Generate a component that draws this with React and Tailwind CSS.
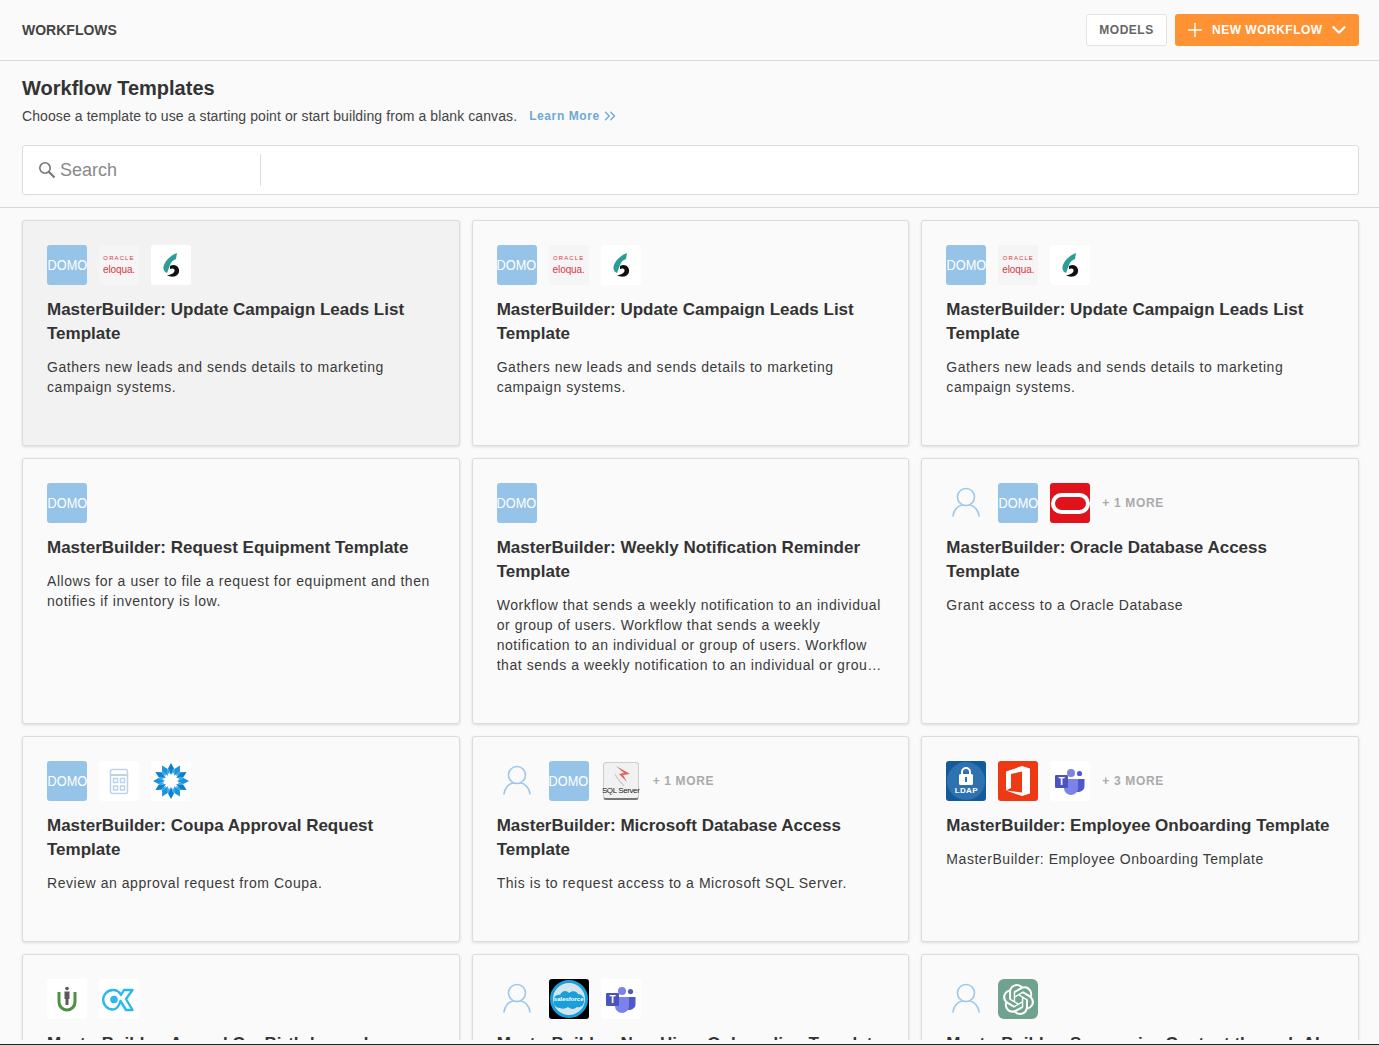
import { ChevronsRight, Plus, ChevronDown } from "lucide-react";
import { SiOpenai } from "react-icons/si";

function Tile({ className = "", children }) {
  return (
    <div className={`w-10 h-10 shrink-0 rounded-[3px] overflow-hidden flex items-center justify-center ${className}`}>
      {children}
    </div>
  );
}

function Domo() {
  return (
    <Tile className="bg-[#96c3e8]">
      <span className="text-white text-[15px] leading-none scale-x-[0.85] -mt-[2px] whitespace-nowrap font-normal">DOMO</span>
    </Tile>
  );
}

function Eloqua() {
  return (
    <Tile className="bg-[#f5f5f5] flex-col">
      <span className="text-[#d8373f] text-[6px] leading-[7px] tracking-[1.1px]">ORACLE</span>
      <span className="text-[#d8373f] text-[10px] leading-[11px] mt-[2px] tracking-[-0.1px]">eloqua.</span>
    </Tile>
  );
}

function Six() {
  return (
    <Tile className="bg-white">
      <svg width="40" height="40" viewBox="0 0 40 40">
        <path d="M26 8 L25 14 C22 15 20 17 19 20 L16 28 C14 27 12 25 12.500 22 C13.500 16 20 10 26 8 Z" fill="#2a9d94" />
        <path d="M19 21 C24 18 29 22 28 27 C27 32 20 33 16 30 C20 30 23 28 23.500 26 C24 24 22 22.500 19 24 Z" fill="#111" />
      </svg>
    </Tile>
  );
}

function Person() {
  return (
    <div className="w-10 h-10 shrink-0 flex items-center justify-center">
      <svg width="40" height="40" viewBox="0 0 40 40" fill="none" stroke="#9cc7ea" strokeWidth="1.6">
        <circle cx="20" cy="14" r="8.500" />
        <path d="M7 33 C7.500 27 12 22.500 16 22 M33 33 C32.500 27 28 22.500 24 22" strokeLinecap="round" />
      </svg>
    </div>
  );
}

function OracleDb() {
  return (
    <Tile className="bg-[#e0131c]">
      <div className="w-[39px] h-[21px] shrink-0 rounded-full border-[4.5px] border-white" />
    </Tile>
  );
}

function Calc() {
  return (
    <Tile className="bg-white">
      <svg width="40" height="40" viewBox="0 0 40 40" fill="none" stroke="#bcd3ea" strokeWidth="1.5">
        <rect x="11.500" y="8.500" width="17" height="24" rx="2" />
        <path d="M12 14 H28" strokeWidth="2" />
        <rect x="14.500" y="17.500" width="4" height="4" />
        <rect x="21.500" y="17.500" width="4" height="4" />
        <rect x="14.500" y="25" width="4" height="4" />
        <rect x="21.500" y="25" width="4" height="4" />
      </svg>
    </Tile>
  );
}

const petals = [0, 30, 60, 90, 120, 150, 180, 210, 240, 270, 300, 330];

function Coupa() {
  return (
    <Tile className="bg-white">
      <svg width="40" height="40" viewBox="0 0 40 40">
        {petals.map((a, i) => (
          <path
            key={a}
            d="M20 14 L17 7.500 L20 2 L23 7.500 Z"
            fill={i % 2 ? "#1b93dc" : "#0f7fcb"}
            transform={`rotate(${a} 20 20)`}
          />
        ))}
        {petals.map((a) => (
          <path key={a} d="M20 13 L18.200 9.500 L20 7 L21.800 9.500 Z" fill="#35a9e8" transform={`rotate(${a + 15} 20 20)`} />
        ))}
      </svg>
    </Tile>
  );
}

function SqlServer() {
  return (
    <Tile>
      <div className="w-9 h-[38px] rounded-[3px] bg-[#f1f1f1] border border-[#ccc] border-b-2 border-b-[#777] flex flex-col items-center justify-end">
        <svg width="24" height="21" viewBox="0 0 24 21" className="shrink-0">
          <path d="M7 1 L21 9 L14 10 L18 17 L10 9 L15 8 Z" fill="#e4605a" />
          <path d="M6 9 C8 14 12 17 15 21" fill="none" stroke="#c9c9c9" strokeWidth="1.2" />
        </svg>
        <span className="text-[#222] text-[8px] leading-[10px] tracking-[-0.4px] whitespace-nowrap mb-[2px]">SQL Server</span>
      </div>
    </Tile>
  );
}

function Ldap() {
  return (
    <Tile className="bg-[#135a9c] relative">
      <div className="absolute w-[38px] h-[38px] rounded-full bg-[#2f72b0]" />
      <div className="relative flex flex-col items-center">
        <svg width="16" height="20" viewBox="0 0 16 20">
          <path d="M4 9 V6 A4 4 0 0 1 12 6 V9" fill="none" stroke="white" strokeWidth="2" />
          <rect x="1" y="8" width="14" height="11" rx="1.500" fill="white" />
          <rect x="7" y="11" width="2" height="5" fill="#2f72b0" />
        </svg>
        <span className="text-white text-[8px] leading-[10px] font-bold tracking-[0.3px]">LDAP</span>
      </div>
    </Tile>
  );
}

function Office() {
  return (
    <Tile className="bg-[#ee3a14]">
      <svg width="40" height="40" viewBox="0 0 40 40">
        <path d="M8 10.500 L24 5 L32 7.500 V32.500 L24 35 L8 29.500 L24 31.500 V10.500 L13 13 V27 L8 29.500 Z" fill="white" />
      </svg>
    </Tile>
  );
}

function Teams() {
  return (
    <Tile className="bg-white">
      <svg width="40" height="40" viewBox="0 0 40 40">
        <circle cx="29.500" cy="12.500" r="2.600" fill="#5059c9" />
        <path d="M27 18 H34.500 V25 C34.500 29 31 31 27 31 Z" fill="#5059c9" />
        <circle cx="21" cy="12" r="4" fill="#7b83eb" />
        <path d="M14 18 H28 V27 A7 7 0 0 1 14 27 Z" fill="#7b83eb" />
        <rect x="5" y="14" width="13" height="13" rx="1.200" fill="#4b53bc" />
        <text x="11.500" y="24" textAnchor="middle" fill="white" fontSize="10" fontWeight="700">T</text>
      </svg>
    </Tile>
  );
}

function Pin() {
  return (
    <Tile className="bg-white">
      <svg width="40" height="40" viewBox="0 0 40 40" fill="none">
        <path d="M12 13 V23 A8 8 0 0 0 28 23 V13" stroke="#4a9140" strokeWidth="3" />
        <circle cx="20" cy="9.500" r="1.800" fill="#5a5a5a" />
        <path d="M17.500 12.500 H22.500 V20 H21.500 V26 H18.500 V20 H17.500 Z" fill="#5a5a5a" />
      </svg>
    </Tile>
  );
}

function Cx() {
  return (
    <Tile className="bg-white">
      <svg width="40" height="40" viewBox="0 0 40 40" fill="none" stroke="#2bb8ee" strokeWidth="2.400" strokeLinejoin="round">
        <path d="M25 11 H33.500 L27 20 L33.500 31 H27 L21.500 22 C20 27 17 30.500 14 30.500 A9.700 9.700 0 1 1 14 11 C18 11 20.500 13 22 16 Z" />
        <circle cx="15" cy="20.500" r="3.800" fill="#2bb8ee" stroke="none" />
      </svg>
    </Tile>
  );
}

function Salesforce() {
  return (
    <Tile className="bg-black relative">
      <div className="absolute w-[38px] h-[38px] rounded-full border-[3px] border-[#1b9fdb] bg-[#d3e4ec]" />
      <svg width="32" height="22" viewBox="0 0 32 22" className="absolute">
        <path d="M7 20 C2 20 0 16 1 13 C0 9 4 6 7 7 C9 2 14 2 16 5 C19 2 24 3 25 6 C29 6 32 10 31 13 C31 18 27 20 24 19 C21 22 17 21 15 19 C12 21 9 21 7 20 Z" fill="#1b9fdb" />
      </svg>
      <span className="relative text-white text-[6px] leading-none font-bold">salesforce</span>
    </Tile>
  );
}

function OpenAi() {
  return (
    <Tile className="bg-[#6fa38f] rounded-[6px]">
      <SiOpenai size={31} color="white" />
    </Tile>
  );
}

const leads = {
  icons: [Domo, Eloqua, Six],
  title: "MasterBuilder: Update Campaign Leads List Template",
  desc: "Gathers new leads and sends details to marketing campaign systems.",
};

const cards = [
  { ...leads, active: true },
  leads,
  leads,
  {
    icons: [Domo],
    title: "MasterBuilder: Request Equipment Template",
    desc: "Allows for a user to file a request for equipment and then notifies if inventory is low.",
  },
  {
    icons: [Domo],
    title: "MasterBuilder: Weekly Notification Reminder Template",
    desc: "Workflow that sends a weekly notification to an individual or group of users. Workflow that sends a weekly notification to an individual or group of users. Workflow that sends a weekly notification to an individual or group of users.",
  },
  {
    icons: [Person, Domo, OracleDb],
    more: 1,
    title: "MasterBuilder: Oracle Database Access Template",
    desc: "Grant access to a Oracle Database",
  },
  {
    icons: [Domo, Calc, Coupa],
    title: "MasterBuilder: Coupa Approval Request Template",
    desc: "Review an approval request from Coupa.",
  },
  {
    icons: [Person, Domo, SqlServer],
    more: 1,
    title: "MasterBuilder: Microsoft Database Access Template",
    desc: "This is to request access to a Microsoft SQL Server.",
  },
  {
    icons: [Ldap, Office, Teams],
    more: 3,
    title: "MasterBuilder: Employee Onboarding Template",
    desc: "MasterBuilder: Employee Onboarding Template",
  },
  { icons: [Pin, Cx], title: "MasterBuilder: Annual Co. Birthday and", desc: "" },
  { icons: [Person, Salesforce, Teams], title: "MasterBuilder: New Hires Onboarding Template", desc: "" },
  { icons: [Person, OpenAi], title: "MasterBuilder: Summarize Content through AI", desc: "" },
];

function Card({ card }) {
  return (
    <div
      className={`rounded-[3px] border border-[#dcdcdc] pt-6 px-6 pb-12 shadow-[0_1px_3px_rgba(0,0,0,0.12)] ${
        card.active ? "bg-[#f2f2f2]" : "bg-[#fafafa]"
      }`}
    >
      <div className="flex items-center gap-3 h-10">
        {card.icons.map((Icon, i) => (
          <Icon key={i} />
        ))}
        {card.more && (
          <span className="text-[12px] font-bold tracking-[0.65px] text-[#aaaaaa]">+ {card.more} MORE</span>
        )}
      </div>
      <h3 className="mt-[13px] text-[17px] leading-6 font-bold text-[#333]">{card.title}</h3>
      <p className="mt-[11px] text-[14px] leading-5 tracking-[0.55px] text-[#3a3a3a] line-clamp-4">{card.desc}</p>
    </div>
  );
}

export default function App() {
  return (
    <div className="h-screen overflow-hidden flex flex-col bg-[#fafafa] border-b border-b-[#222] font-['Liberation_Sans',sans-serif]">
      <header className="h-[61px] shrink-0 flex items-center justify-between pl-[22px] pr-5 border-b border-[#d9d9d9]">
        <h1 className="text-[14px] font-bold text-[#444]">WORKFLOWS</h1>
        <div className="flex items-center gap-2">
          <button className="h-8 w-[81px] rounded-[3px] border border-[#e3e3e3] bg-white text-[12px] font-bold tracking-[0.5px] text-[#666]">
            MODELS
          </button>
          <button className="h-8 w-[184px] rounded-[3px] bg-[#ff9233] flex items-center pl-[9px] text-white text-[12px] font-bold tracking-[0.5px]">
            <Plus size={22} strokeWidth={1.6} className="mr-[6px]" />
            NEW WORKFLOW
            <ChevronDown size={22} strokeWidth={2.6} className="ml-[5px]" />
          </button>
        </div>
      </header>
      <section className="shrink-0 pl-[22px] pr-5 pt-[15px] pb-3 border-b border-[#d9d9d9]">
        <h2 className="text-[20px] leading-6 font-bold text-[#333]">Workflow Templates</h2>
        <div className="mt-[6px] flex items-center h-5">
          <p className="text-[14px] tracking-[0.09px] text-[#444]">
            Choose a template to use a starting point or start building from a blank canvas.
          </p>
          <a className="ml-[12px] flex items-center text-[12px] font-bold tracking-[0.6px] text-[#6fa8d6]">
            Learn More
            <ChevronsRight size={18} strokeWidth={1.8} className="ml-[1px]" />
          </a>
        </div>
        <div className="mt-[19px] h-[50px] rounded-[3px] border border-[#dcdcdc] bg-white flex items-center">
          <div className="w-[238px] h-8 border-r border-[#dcdcdc] flex items-center pl-[15px] gap-[4px]">
            <svg width="18" height="18" viewBox="0 0 18 18" fill="none" stroke="#777">
              <circle cx="7" cy="7" r="5.200" strokeWidth="1.600" />
              <path d="M10.800 10.800 L16.500 16.500" strokeWidth="2.200" />
            </svg>
            <span className="text-[18px] text-[#8a8a8a]">Search</span>
          </div>
        </div>
      </section>
      <main className="flex-1 min-h-0 overflow-hidden mb-1 pl-[22px] pr-5 pt-3">
        <div className="grid grid-cols-3 gap-3 items-stretch">
          {cards.map((card, i) => (
            <Card key={i} card={card} />
          ))}
        </div>
      </main>
    </div>
  );
}
